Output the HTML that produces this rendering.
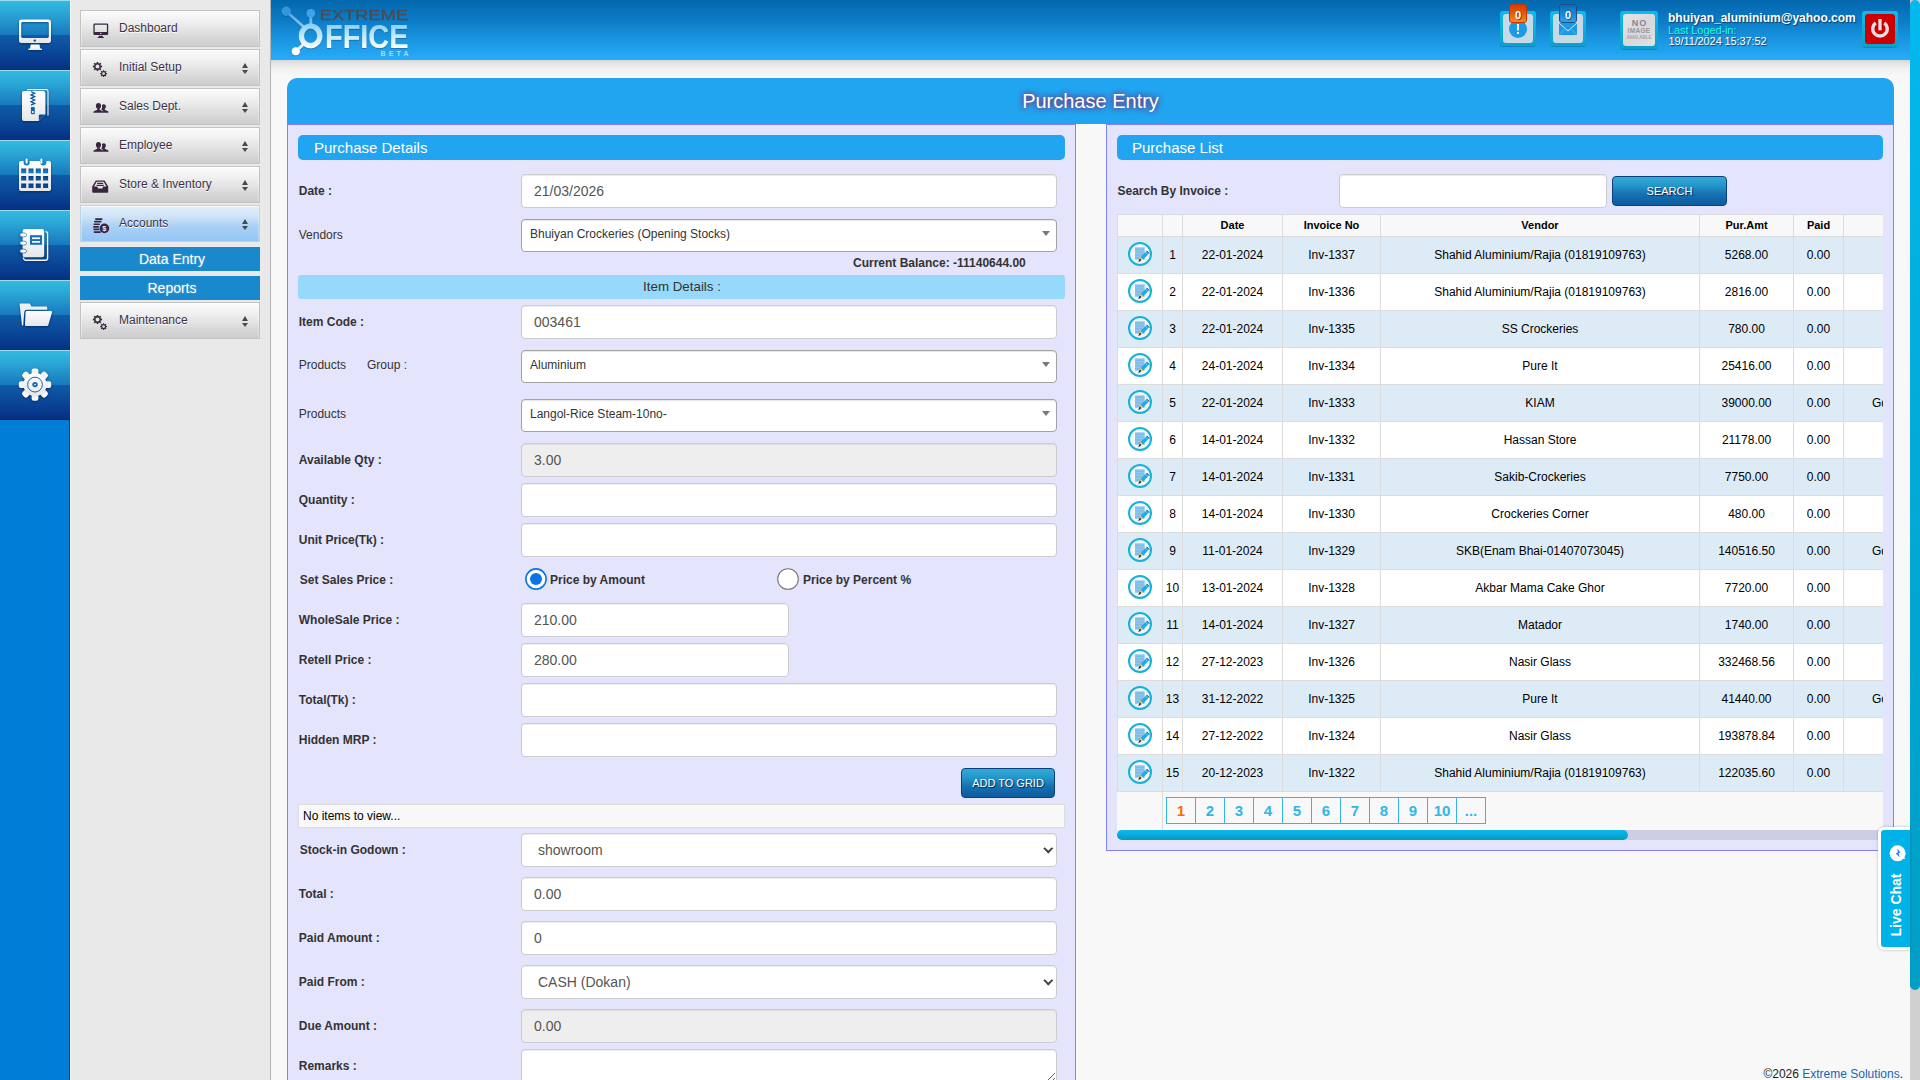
<!DOCTYPE html>
<html>
<head>
<meta charset="utf-8">
<title>Purchase Entry</title>
<style>
*{box-sizing:border-box;margin:0;padding:0}
html,body{width:1920px;height:1080px;overflow:hidden}
body{font-family:"Liberation Sans",sans-serif;font-size:12px;color:#333;background:#f8f8f8;position:relative}
.abs{position:absolute}

/* ---------- icon bar ---------- */
#iconbar{position:absolute;left:0;top:0;width:70px;height:1080px;background:#007dd6;border-right:1px solid #0a3d72}
.tile{position:absolute;left:0;width:70px;height:70px;border-top:1px solid #9adcf2;
 background:linear-gradient(to bottom,#33bbe0 0%,#2ba6d6 18%,#1d86c5 40%,#1878bc 50%,#0f5ba8 50%,#0b4b9a 70%,#07398c 90%,#06307f 100%)}
.tile svg{position:absolute;left:0;top:-1px;width:70px;height:70px;filter:drop-shadow(0 1px 1px rgba(0,20,60,.55))}

/* ---------- menu panel ---------- */
#menu{position:absolute;left:70px;top:0;width:201px;height:1080px;background:#e9e9e9;border-right:1px solid #b4b4b4;border-left:1px solid #f7f5f1}
.mbtn{position:absolute;left:9px;width:180px;height:37px;border:1px solid #c3c3c3;
 background:linear-gradient(to bottom,#fbfbfb 0%,#f2f2f2 25%,#e3e3e3 55%,#d6d6d6 80%,#cdcdcd 100%);
 box-shadow:inset 0 1px 0 rgba(255,255,255,.7),inset 1px 0 0 rgba(255,255,255,.35),inset -1px 0 0 rgba(255,255,255,.25);
 color:#3d3149;font-size:12px;line-height:14px;text-shadow:0 1px 0 #fff}
.mbtn.act{background:linear-gradient(to bottom,#e3eefa 0%,#cfe3f8 30%,#a9d0f5 60%,#93c6f5 100%);border-color:#b9d3ea}
.mbtn span{position:absolute;left:38px;top:10px;white-space:nowrap}
.mbtn svg.ic{position:absolute;left:11px;top:11px;width:18px;height:18px}
.mbtn i{position:absolute;left:161.200px;width:0;height:0;border-left:3.900px solid transparent;border-right:3.900px solid transparent}
.mbtn i.u{top:13px;border-bottom:5px solid #4a4a4a}
.mbtn i.d{top:20px;border-top:4.5px solid #4a4a4a}
.sub{position:absolute;left:9px;width:180px;height:24px;padding-left:4px;background:#1a88cd;color:#fff;font-size:14px;line-height:24px;text-align:center;text-shadow:0 0 2px rgba(255,255,255,.35)}

/* ---------- header ---------- */
#header{position:absolute;left:271px;top:0;width:1639px;height:60px;background:linear-gradient(to bottom,#0367ad 0%,#0d7cc6 35%,#1c98e4 70%,#28acf8 100%)}
#hshadow{position:absolute;left:271px;top:60px;width:1639px;height:16px;background:linear-gradient(to bottom,#d6d6d6 0%,#e6e6e6 25%,#f1f1f1 55%,#f8f8f8 100%)}

/* ---------- main ---------- */
#titlebar{position:absolute;left:287px;top:78px;width:1607px;height:46px;background:#22a5f0;border-radius:10px 10px 0 0;
 color:#fff;font-size:20px;line-height:46px;text-align:center;text-shadow:0 0 6px rgba(130,30,100,.95),0 0 5px rgba(130,40,110,.75)}
#lpanel{position:absolute;left:287px;top:124px;width:789px;height:970px;background:#e4e4fd;border:1px solid #8080ff}
#rpanel{position:absolute;left:1106px;top:124px;width:788px;height:727px;background:#e4e4fd;border:1px solid #8080ff}
.shead{position:absolute;height:25px;background:#22a5f0;border-radius:5px;color:#fff;font-size:15px;line-height:25px;padding-left:16px}
.lbl{position:absolute;left:298.75px;font-weight:bold;font-size:12px;line-height:14px;color:#333;white-space:nowrap}
.lbl.n{font-weight:normal}
.fc{position:absolute;left:521px;width:536px;height:34px;border:1px solid #ccc;border-radius:4px;background:#fff;
 box-shadow:inset 0 1px 1px rgba(0,0,0,.075);font-size:14px;line-height:20px;color:#555;padding:6px 12px;white-space:nowrap}
.fc.dis{background:#eee}
.fc.half{width:268px}
.cb{position:absolute;left:521px;width:536px;height:33px;border:1px solid #a2a2a2;border-radius:4px;background:#fff;
 font-size:12px;line-height:14px;color:#333;padding:7px 8px;white-space:nowrap;box-shadow:inset 0 1px 1px rgba(0,0,0,.1)}
.cb:after{content:"";position:absolute;right:6px;top:11px;border-left:4px solid transparent;border-right:4px solid transparent;border-top:5px solid #7a7a7a}
.sel:after{content:"";position:absolute;right:4.900px;top:11.200px;width:4.600px;height:4.600px;border-right:2px solid #444;border-bottom:2px solid #444;transform:rotate(45deg)}
.sel{padding-left:16px}
.btn{position:absolute;height:30px;border:1px solid #0b3f7e;border-radius:4px;color:#fff;text-align:center;font-size:11px;line-height:28px;
 background:linear-gradient(to bottom,#31abd6 0%,#2596cb 30%,#1573b2 60%,#0d5a9f 100%);text-shadow:1px 1px 1px #06264f}

.radio{width:22px;height:22px;border-radius:50%;background:#fff;border:1px solid #767676}
.radio.on{border:2px solid #0a74e6}
.radio.on:after{content:"";position:absolute;left:3px;top:3px;width:12px;height:12px;border-radius:50%;background:#0a74e6}

#grid{position:absolute;left:1117px;top:214px;width:766px;height:616px;overflow:hidden;background:#f8f8f8}
.gh{position:absolute;left:0;top:0;width:800px;height:23px;background:#f8f8f8}
.gh b{position:absolute;top:0;height:23px;border:1px solid #dcdcdc;border-right:none;font-size:11px;line-height:21px;text-align:center;color:#000;font-weight:bold}
.gr{position:absolute;left:0;width:800px;height:37px;background:#fff}
.gr.alt{background:#ddebf6}
.gr s{position:absolute;top:0;height:38px;border:1px solid #dcdcdc;border-right:none;border-bottom:none;text-decoration:none;font-size:12px;line-height:36px;text-align:center;color:#000;white-space:nowrap;overflow:hidden}
.eic{position:absolute;left:9px;top:4px;width:26px;height:26px}
.pgr{position:absolute;left:0;top:577px;width:800px;height:39px;background:#f8f8f8;border-top:1px solid #dcdcdc}
.pgr em{position:absolute;left:45px;top:0;width:1px;height:39px;background:#dcdcdc}
.pgr a{position:absolute;top:5px;width:30px;height:27px;border:1px solid #33b5e5;color:#33b5e5;font-weight:bold;font-size:15px;line-height:25px;text-align:center}
.pgr a.cur{color:#ff6a00}

.hbox{position:absolute;background:linear-gradient(to bottom,#0fbaec 0%,#0aa0cc 100%);border-radius:3px;box-shadow:0 1px 0 rgba(0,120,170,.6)}
.hbox>div{position:absolute;left:3px;top:3px;right:3px;bottom:3px;border-radius:3px;background:#c6d9e6}
.badge{position:absolute;width:18px;height:19px;border-radius:3px;color:#fff;font-weight:bold;font-size:11px;line-height:20px;text-align:center;text-shadow:1px 1px 0 rgba(0,0,0,.45)}
</style>
</head>
<body>

<!-- ICON BAR -->
<div id="iconbar">
 <div class="tile" style="top:0"><svg viewBox="0 0 70 70"><defs><linearGradient id="wg1" x1="0" y1="0" x2="0" y2="1"><stop offset="0" stop-color="#ffffff"/><stop offset="1" stop-color="#e4e6ea"/></linearGradient></defs>
<path fill="url(#wg1)" fill-rule="evenodd" d="M21.5 19.5h27a2.5 2.5 0 0 1 2.5 2.5v18.5a2.5 2.5 0 0 1-2.5 2.5h-27a2.5 2.5 0 0 1-2.5-2.5v-18.5a2.5 2.5 0 0 1 2.5-2.5zM22.6 22a1.4 1.4 0 0 0-1.4 1.4v13.2a1.4 1.4 0 0 0 1.4 1.4h24.8a1.4 1.4 0 0 0 1.4-1.4v-13.2a1.4 1.4 0 0 0-1.4-1.4z"/>
<circle cx="34.8" cy="40.6" r="1.2" fill="#0d4f9f"/>
<path fill="url(#wg1)" d="M30.8 44.6h8.6l0.9 3.9h1a0.7 0.7 0 0 1 0 1.6h-12.4a0.7 0.7 0 0 1 0-1.6h1z"/></svg></div>
 <div class="tile" style="top:70px"><svg viewBox="0 0 70 70"><defs><linearGradient id="wg2" x1="0" y1="0" x2="0" y2="1"><stop offset="0" stop-color="#ffffff"/><stop offset="1" stop-color="#e4e6ea"/></linearGradient></defs>
<path fill="none" stroke="#f4f6f8" stroke-width="1.1" d="M27 19.6h19.4a1.6 1.6 0 0 1 1.6 1.6v24.3"/>
<path fill="url(#wg2)" d="M24 21h19.4a2 2 0 0 1 2 2v21.3l-6.8 6.7h-14.6a2 2 0 0 1-2-2v-26a2 2 0 0 1 2-2z"/>
<path fill="#0b4a98" d="M38.8 50.6v-5.2a1 1 0 0 1 1-1h5.2z"/>
<path fill="none" stroke="#0f5aa8" stroke-width="1.3" d="M31 21.5l3.6 1.7-3.6 1.7 3.6 1.7-3.6 1.7 3.6 1.7-3.6 1.7 3.6 1.7-3.6 1.7"/>
<rect x="30.9" y="37" width="3.9" height="7.2" rx="1" fill="#1364b0"/><rect x="32" y="41" width="1.7" height="2" fill="#dfe6ee"/></svg></div>
 <div class="tile" style="top:140px"><svg viewBox="0 0 70 70"><defs><linearGradient id="wg3" x1="0" y1="0" x2="0" y2="1"><stop offset="0" stop-color="#ffffff"/><stop offset="1" stop-color="#e4e6ea"/></linearGradient></defs>
<path fill="url(#wg3)" fill-rule="evenodd" d="M21 21h2.6v1.5a3 3 0 0 0 6 0v-1.5h10.8v1.5a3 3 0 0 0 6 0v-1.5h2.6a2 2 0 0 1 2 2v26a2 2 0 0 1-2 2h-28a2 2 0 0 1-2-2v-26a2 2 0 0 1 2-2zM21.2 28.6h5v4.6h-5zM28.5 28.6h5v4.6h-5zM35.8 28.6h5v4.6h-5zM43.1 28.6h5v4.6h-5zM21.2 36.0h5v4.6h-5zM28.5 36.0h5v4.6h-5zM35.8 36.0h5v4.6h-5zM43.1 36.0h5v4.6h-5zM21.2 43.4h5v4.6h-5zM28.5 43.4h5v4.6h-5zM35.8 43.4h5v4.6h-5zM43.1 43.4h5v4.6h-5z"/>
<rect x="25.6" y="18.4" width="2" height="5.4" rx="1" fill="#fff"/><rect x="40.4" y="18.4" width="2" height="5.4" rx="1" fill="#fff"/></svg></div>
 <div class="tile" style="top:210px"><svg viewBox="0 0 70 70"><defs><linearGradient id="wg4" x1="0" y1="0" x2="0" y2="1"><stop offset="0" stop-color="#ffffff"/><stop offset="1" stop-color="#e4e6ea"/></linearGradient></defs>
<path fill="none" stroke="#f4f6f8" stroke-width="1.4" d="M45.6 21.8a2 2 0 0 1 2 2v24.4a2 2 0 0 1-2 2h-19.6a2.6 2.6 0 0 1-2.6-2.6"/>
<rect x="22.6" y="19" width="21.6" height="28.2" rx="2.2" fill="url(#wg4)"/>
<ellipse cx="23.2" cy="24.9" rx="3.4" ry="2.1" fill="#fff" stroke="#1473bb" stroke-width="0.7"/>
<ellipse cx="23.2" cy="33.1" rx="3.4" ry="2.1" fill="#fff" stroke="#1168b2" stroke-width="0.7"/>
<ellipse cx="23.2" cy="41.1" rx="3.4" ry="2.1" fill="#fff" stroke="#0e59a4" stroke-width="0.7"/>
<rect x="30" y="25.2" width="12" height="9.6" fill="#1470bb"/><rect x="32" y="27.4" width="8" height="1.7" fill="#fff"/><rect x="32" y="31" width="8" height="1.7" fill="#fff"/></svg></div>
 <div class="tile" style="top:280px"><svg viewBox="0 0 70 70"><defs><linearGradient id="wg5" x1="0" y1="0" x2="0" y2="1"><stop offset="0" stop-color="#ffffff"/><stop offset="1" stop-color="#e4e6ea"/></linearGradient></defs>
<path fill="#eceef2" d="M19.6 24.3a0.8 0.8 0 0 1 0.8-0.8h9.4l1.6 3h14.8a1 1 0 0 1 1 1v2.3h-20.6a2.4 2.4 0 0 0-2.4 2.2l-1 13.6h-1.2z"/>
<path fill="url(#wg5)" d="M26.6 31h24.2a1.2 1.2 0 0 1 1.2 1.6l-3.6 12.2a1.6 1.6 0 0 1-1.6 1.2h-20.4a1.4 1.4 0 0 1-1.4-1.6l0.6-12.2a1.2 1.2 0 0 1 1-1.2z"/></svg></div>
 <div class="tile" style="top:350px;border-bottom:1px solid #041c52"><svg viewBox="0 0 70 70"><defs><linearGradient id="wg6" x1="0" y1="0" x2="0" y2="1"><stop offset="0" stop-color="#ffffff"/><stop offset="1" stop-color="#e4e6ea"/></linearGradient></defs>
<g transform="translate(35 34.6)" fill="url(#wg6)"><rect x="-3.4" y="-16.2" width="6.8" height="7" rx="2.2" transform="rotate(0)"/><rect x="-3.4" y="-16.2" width="6.8" height="7" rx="2.2" transform="rotate(45)"/><rect x="-3.4" y="-16.2" width="6.8" height="7" rx="2.2" transform="rotate(90)"/><rect x="-3.4" y="-16.2" width="6.8" height="7" rx="2.2" transform="rotate(135)"/><rect x="-3.4" y="-16.2" width="6.8" height="7" rx="2.2" transform="rotate(180)"/><rect x="-3.4" y="-16.2" width="6.8" height="7" rx="2.2" transform="rotate(225)"/><rect x="-3.4" y="-16.2" width="6.8" height="7" rx="2.2" transform="rotate(270)"/><rect x="-3.4" y="-16.2" width="6.8" height="7" rx="2.2" transform="rotate(315)"/><circle r="11.6"/></g>
<circle cx="35" cy="34.6" r="7.4" fill="none" stroke="#0d4f9e" stroke-width="0.9"/>
<circle cx="35" cy="34.6" r="2.7" fill="#1468b4"/><circle cx="35" cy="34.6" r="0.8" fill="#fff"/></svg></div>
</div>

<!-- MENU -->
<div id="menu">
 <div class="mbtn" style="top:10px"><svg class="ic" viewBox="0 0 18 18"><path fill="#38263f" fill-rule="evenodd" d="M2.6 1.4h12.4a1.2 1.2 0 0 1 1.2 1.2v9.2a1.2 1.2 0 0 1-1.2 1.2h-12.4a1.2 1.2 0 0 1-1.2-1.2v-9.2a1.2 1.2 0 0 1 1.2-1.2zM2.7 2.7v7.3h12.2v-7.3z"/><circle cx="8.8" cy="11.4" r="0.6" fill="#fff"/><path fill="#38263f" d="M7 13.7h3.6l0.5 1.5h0.9v0.9h-6.4v-0.9h0.9z"/></svg><span>Dashboard</span></div>
 <div class="mbtn" style="top:49px"><svg class="ic" viewBox="0 0 18 18"><path fill="#38263f" fill-rule="evenodd" d="M10.11 4.58L10.11 6.42L8.93 6.18L8.41 7.44L9.41 8.11L8.11 9.41L7.44 8.41L6.18 8.93L6.42 10.11L4.58 10.11L4.82 8.93L3.56 8.41L2.89 9.41L1.59 8.11L2.59 7.44L2.07 6.18L0.89 6.42L0.89 4.58L2.07 4.82L2.59 3.56L1.59 2.89L2.89 1.59L3.56 2.59L4.82 2.07L4.58 0.89L6.42 0.89L6.18 2.07L7.44 2.59L8.11 1.59L9.41 2.89L8.41 3.56L8.93 4.82zM7.50 5.50A2.0 2.0 0 1 0 3.50 5.50A2.0 2.0 0 1 0 7.50 5.50z"/><path fill="#38263f" fill-rule="evenodd" d="M15.03 11.92L15.03 13.28L14.15 13.11L13.76 14.04L14.51 14.54L13.54 15.51L13.04 14.76L12.11 15.15L12.28 16.03L10.92 16.03L11.09 15.15L10.16 14.76L9.66 15.51L8.69 14.54L9.44 14.04L9.05 13.11L8.17 13.28L8.17 11.92L9.05 12.09L9.44 11.16L8.69 10.66L9.66 9.69L10.16 10.44L11.09 10.05L10.92 9.17L12.28 9.17L12.11 10.05L13.04 10.44L13.54 9.69L14.51 10.66L13.76 11.16L14.15 12.09zM13.00 12.60A1.4 1.4 0 1 0 10.20 12.60A1.4 1.4 0 1 0 13.00 12.60z"/></svg><span>Initial Setup</span><i class="u"></i><i class="d"></i></div>
 <div class="mbtn" style="top:88px"><svg class="ic" viewBox="0 0 18 18"><g fill="#38263f" transform="translate(0.3 -1.6) scale(0.95)"><path d="M12.2 6.2c1.3 0 2.1 1 2.1 2.3 0 1.2-.6 2.2-1.2 2.7v.7l3.4 1.6c.3.2.5.5.5.9v.6h-5.6v-1.2c0-.6-.3-1.1-.9-1.4l-1-.5c.5-.7.9-1.600.9-2.800 0-.7-.1-1.300-.4-1.800.5-.7 1.300-1.100 2.200-1.100z"/><path d="M6.500 4.800c1.700 0 2.700 1.300 2.700 2.900 0 1.500-.7 2.700-1.500 3.300v.9l3.300 1.500c.4.200.7.600.7 1.100v.5h-10.600v-.5c0-.5.300-.900.700-1.100l3.500-1.500v-.9c-.8-.6-1.500-1.800-1.500-3.300 0-1.600 1-2.900 2.700-2.900z"/></g></svg><span>Sales Dept.</span><i class="u"></i><i class="d"></i></div>
 <div class="mbtn" style="top:127px"><svg class="ic" viewBox="0 0 18 18"><g fill="#38263f" transform="translate(0.3 -1.6) scale(0.95)"><path d="M12.2 6.2c1.3 0 2.1 1 2.1 2.3 0 1.2-.6 2.2-1.2 2.7v.7l3.4 1.6c.3.2.5.5.5.9v.6h-5.6v-1.2c0-.6-.3-1.1-.9-1.4l-1-.5c.5-.7.9-1.600.9-2.800 0-.7-.1-1.300-.4-1.800.5-.7 1.300-1.100 2.200-1.100z"/><path d="M6.500 4.800c1.700 0 2.700 1.300 2.700 2.900 0 1.500-.7 2.700-1.500 3.300v.9l3.300 1.500c.4.200.7.600.7 1.100v.5h-10.600v-.5c0-.5.300-.900.700-1.100l3.500-1.500v-.9c-.8-.6-1.500-1.800-1.500-3.300 0-1.600 1-2.900 2.700-2.900z"/></g></svg><span>Employee</span><i class="u"></i><i class="d"></i></div>
 <div class="mbtn" style="top:166px"><svg class="ic" viewBox="0 0 18 18"><g fill="#38263f" transform="translate(-0.8 -0.8)"><path fill-rule="evenodd" d="M4.600 3.200h8.800l3.600 6.200v5.200a1 1 0 0 1-1 1h-14a1 1 0 0 1-1-1v-5.200zM5.500 4.600l-2.700 4.800h3.300l.8 1.800h4.200l.8-1.800h3.300l-2.700-4.800z"/><rect x="6" y="5.600" width="6" height="1.200"/><rect x="5.400" y="7.600" width="7.200" height="1.200"/></g></svg><span>Store &amp; Inventory</span><i class="u"></i><i class="d"></i></div>
 <div class="mbtn act" style="top:205px"><svg class="ic" viewBox="0 0 18 18"><g fill="#38263f"><rect x="3" y="1.200" width="7.600" height="1.700" rx=".8"/><rect x="2" y="3.800" width="7.600" height="1.700" rx=".8"/><rect x="1.400" y="6.400" width="6.600" height="1.700" rx=".8"/><rect x="1" y="9" width="6" height="1.700" rx=".8"/><rect x="1.400" y="11.600" width="6" height="1.700" rx=".8"/><rect x="1.600" y="14.200" width="7.400" height="1.700" rx=".8"/><circle cx="12.400" cy="11.400" r="4.800"/></g><text x="12.400" y="14" font-family="Liberation Sans" font-weight="bold" font-size="7.400" fill="#e6eef8" text-anchor="middle" style="text-shadow:none">$</text></svg><span>Accounts</span><i class="u"></i><i class="d"></i></div>
 <div class="sub" style="top:247px">Data Entry</div>
 <div class="sub" style="top:276px">Reports</div>
 <div class="mbtn" style="top:302px"><svg class="ic" viewBox="0 0 18 18"><path fill="#38263f" fill-rule="evenodd" d="M10.11 4.58L10.11 6.42L8.93 6.18L8.41 7.44L9.41 8.11L8.11 9.41L7.44 8.41L6.18 8.93L6.42 10.11L4.58 10.11L4.82 8.93L3.56 8.41L2.89 9.41L1.59 8.11L2.59 7.44L2.07 6.18L0.89 6.42L0.89 4.58L2.07 4.82L2.59 3.56L1.59 2.89L2.89 1.59L3.56 2.59L4.82 2.07L4.58 0.89L6.42 0.89L6.18 2.07L7.44 2.59L8.11 1.59L9.41 2.89L8.41 3.56L8.93 4.82zM7.50 5.50A2.0 2.0 0 1 0 3.50 5.50A2.0 2.0 0 1 0 7.50 5.50z"/><path fill="#38263f" fill-rule="evenodd" d="M15.03 11.92L15.03 13.28L14.15 13.11L13.76 14.04L14.51 14.54L13.54 15.51L13.04 14.76L12.11 15.15L12.28 16.03L10.92 16.03L11.09 15.15L10.16 14.76L9.66 15.51L8.69 14.54L9.44 14.04L9.05 13.11L8.17 13.28L8.17 11.92L9.05 12.09L9.44 11.16L8.69 10.66L9.66 9.69L10.16 10.44L11.09 10.05L10.92 9.17L12.28 9.17L12.11 10.05L13.04 10.44L13.54 9.69L14.51 10.66L13.76 11.16L14.15 12.09zM13.00 12.60A1.4 1.4 0 1 0 10.20 12.60A1.4 1.4 0 1 0 13.00 12.60z"/></svg><span>Maintenance</span><i class="u"></i><i class="d"></i></div>
</div>

<!-- HEADER -->
<div id="header"></div>
<div id="hshadow"></div>


<!-- HEADER CONTENT -->
<svg class="abs" style="left:271px;top:0" width="160" height="60" viewBox="0 0 160 60">
 <defs>
  <linearGradient id="lg1" gradientUnits="userSpaceOnUse" x1="0" y1="24" x2="0" y2="48"><stop offset="0" stop-color="#86cffa"/><stop offset="0.5" stop-color="#c4e8fb"/><stop offset="1" stop-color="#ffffff"/></linearGradient>
  <linearGradient id="lg2" gradientUnits="userSpaceOnUse" x1="0" y1="8" x2="0" y2="30"><stop offset="0" stop-color="#3a9de0"/><stop offset="1" stop-color="#8ed0f8"/></linearGradient>
  <filter id="ds" x="-10%" y="-10%" width="120%" height="130%"><feDropShadow dx="0" dy="0.5" stdDeviation="0.7" flood-color="#0a3a6a" flood-opacity=".75"/></filter>
 </defs>
 <g filter="url(#ds)">
  <path d="M15.2 11.2L32.6 26.8" stroke="url(#lg2)" stroke-width="2.8"/>
  <path d="M39.8 13.3V24.6" stroke="url(#lg2)" stroke-width="2.8"/>
  <path d="M24.8 51.2L32 44.8" stroke="#f2f9ff" stroke-width="2.8"/>
  <circle cx="15.2" cy="11.2" r="4.7" fill="#3297dc"/>
  <circle cx="39.8" cy="13.3" r="4.4" fill="#3fa3e6"/>
  <circle cx="24.8" cy="51.2" r="4" fill="#fff"/>
  <ellipse cx="39.6" cy="35.8" rx="9.2" ry="9.8" fill="none" stroke="url(#lg1)" stroke-width="5.2"/>
 </g>
 <text x="49" y="19.9" font-family="Liberation Sans" font-size="15" fill="#484d57" stroke="#484d57" stroke-width="0.35" textLength="88.5" lengthAdjust="spacingAndGlyphs">EXTREME</text>
 <g filter="url(#ds)">
 <text x="54" y="47.8" font-family="Liberation Sans" font-weight="bold" font-size="33" fill="url(#lg1)" textLength="83.5" lengthAdjust="spacingAndGlyphs">FFICE</text>
 </g>
 <text x="109.500" y="55.500" font-family="Liberation Sans" font-weight="bold" font-size="7" fill="#a6dcfa" textLength="28" lengthAdjust="spacing">BETA</text>
</svg>

<div class="hbox" style="left:1500px;top:11px;width:36px;height:35px"><div></div></div>
<svg class="abs" style="left:1508px;top:19px" width="20" height="20" viewBox="0 0 20 20"><circle cx="10" cy="10" r="9" fill="#1d9ae6"/><rect x="9" y="5" width="2" height="6.5" fill="#e8f2f8"/><rect x="9" y="13" width="2" height="2" fill="#e8f2f8"/></svg>
<div class="badge" style="left:1509px;top:4px;background:linear-gradient(to bottom,#d63c00 0%,#e85a08 50%,#f68d1e 100%);border:1px solid #c23600">0</div>

<div class="hbox" style="left:1550px;top:11px;width:36px;height:35px"><div></div></div>
<svg class="abs" style="left:1559px;top:23px" width="18" height="12" viewBox="0 0 18 12"><rect width="18" height="12" rx="1" fill="#1d9ae6"/><path d="M0.5 0.5L9 8L17.5 0.5" fill="none" stroke="#cfe6f5" stroke-width="1"/><path d="M1 11L6.5 6M17 11L11.5 6" stroke="#5ab6ee" stroke-width="0.8"/></svg>
<div class="badge" style="left:1559px;top:4px;background:linear-gradient(to bottom,#0c6cb8 0%,#1786d4 50%,#2ba2ec 100%);border:1px solid #1a4f80">0</div>

<div class="hbox" style="left:1620px;top:11px;width:38px;height:38px"><div style="background:linear-gradient(135deg,#e6e6e9 0%,#d8d8dc 50%,#e2e2e5 100%)"></div></div>
<div class="abs" style="left:1623px;top:19px;width:32px;text-align:center;font-weight:bold;color:#85858d;line-height:1">
 <div style="font-size:9px;letter-spacing:1px;padding-left:1px">NO</div><div style="font-size:6.500px;letter-spacing:.3px;margin-top:0;color:#96969d">IMAGE</div><div style="font-size:4.500px;margin-top:1.5px;color:#a2a2a8">AVAILABLE</div></div>

<div class="abs" style="left:1668px;top:11px;font-size:12px;font-weight:bold;color:#fff;line-height:14px;text-shadow:1px 1px 1px #0b3b66;white-space:nowrap">bhuiyan_aluminium@yahoo.com</div>
<div class="abs" style="left:1668px;top:24px;font-size:11px;letter-spacing:-0.1px;color:#1cfce8;line-height:12px;text-shadow:1px 1px 1px #0b5a96;white-space:nowrap">Last Loged-in:</div>
<div class="abs" style="left:1668.5px;top:35px;font-size:11px;letter-spacing:-0.11px;color:#fff;line-height:12px;text-shadow:1px 1px 1px #0b3b66;white-space:nowrap">19/11/2024 15:37:52</div>

<div class="hbox" style="left:1862px;top:11px;width:36px;height:36px"><div style="background:#cc0000"></div></div>
<svg class="abs" style="left:1870px;top:19px" width="20" height="20" viewBox="0 0 20 20"><path d="M5.700 3.900A7.300 7.300 0 1 0 14.300 3.900" fill="none" stroke="#e8dcdc" stroke-width="3.500"/><path d="M10 0V11.300" stroke="#e6e2e2" stroke-width="3.300"/></svg>

<!-- SCROLLBAR -->
<div class="abs" style="left:1910px;top:0;width:10px;height:1080px;background:#d0d0d0"></div>
<div class="abs" style="left:1910px;top:0;width:10px;height:990px;border-radius:5px;background:linear-gradient(to bottom,#02b9ee 0%,#01a9d6 50%,#009ec5 100%)"></div>

<!-- FOOTER -->
<div class="abs" style="left:1700px;top:1067px;width:203px;text-align:right;font-size:12px;line-height:14px;color:#222;white-space:nowrap">&copy;2026 <span style="color:#1565c0">Extreme Solutions</span>.</div>

<!-- MAIN -->
<div id="titlebar">Purchase Entry</div>
<div id="lpanel"></div>
<div id="rpanel"></div>

<div class="shead" style="left:298px;top:135px;width:767px">Purchase Details</div>
<div class="shead" style="left:1117px;top:135px;width:766px;padding-left:15px">Purchase List</div>


<!-- LEFT FORM -->
<div class="lbl" style="top:184px">Date :</div>
<div class="fc" style="top:174px">21/03/2026</div>
<div class="lbl n" style="top:228px">Vendors</div>
<div class="cb" style="top:219px">Bhuiyan Crockeries (Opening Stocks)</div>
<div class="lbl" style="left:853px;top:256px">Current Balance: -11140644.00</div>
<div class="abs" style="left:298px;top:275px;width:767px;height:24px;background:#97d9fd;border-radius:3px;text-align:center;font-size:13.33px;line-height:23px;color:#333;padding-left:1px">Item Details :</div>
<div class="lbl" style="top:315px">Item Code :</div>
<div class="fc" style="top:305px">003461</div>
<div class="lbl n" style="top:358px">Products</div><div class="lbl n" style="left:367px;top:358px">Group :</div>
<div class="cb" style="top:350px">Aluminium</div>
<div class="lbl n" style="top:407px">Products</div>
<div class="cb" style="top:399px">Langol-Rice Steam-10no-</div>
<div class="lbl" style="top:453px">Available Qty :</div>
<div class="fc dis" style="top:443px">3.00</div>
<div class="lbl" style="top:493px">Quantity :</div>
<div class="fc" style="top:483px"></div>
<div class="lbl" style="top:533px">Unit Price(Tk) :</div>
<div class="fc" style="top:523px"></div>
<div class="lbl" style="left:299.75px;top:573px">Set Sales Price :</div>
<svg class="abs" style="left:525px;top:568px" width="22" height="22" viewBox="0 0 22 22"><circle cx="11" cy="11" r="10.1" fill="#fff" stroke="#0a74e6" stroke-width="1.6"/><circle cx="11" cy="11" r="6" fill="#0a74e6"/></svg>
<div class="lbl" style="left:550px;top:573px">Price by Amount</div>
<svg class="abs" style="left:777px;top:568px" width="22" height="22" viewBox="0 0 22 22"><circle cx="11" cy="11" r="10.3" fill="#fff" stroke="#767676" stroke-width="1.1"/></svg>
<div class="lbl" style="left:803px;top:573px">Price by Percent %</div>
<div class="lbl" style="top:613px">WholeSale Price :</div>
<div class="fc half" style="top:603px">210.00</div>
<div class="lbl" style="top:653px">Retell Price :</div>
<div class="fc half" style="top:643px">280.00</div>
<div class="lbl" style="top:693px">Total(Tk) :</div>
<div class="fc" style="top:683px"></div>
<div class="lbl" style="top:733px">Hidden MRP :</div>
<div class="fc" style="top:723px"></div>
<div class="btn" style="left:961px;top:768px;width:94px">ADD TO GRID</div>
<div class="abs" style="left:298px;top:804px;width:767px;height:24px;background:#f8f8f8;border:1px solid #dcdcdc;font-size:12px;line-height:22px;padding-left:4px;color:#000">No items to view...</div>
<div class="lbl" style="left:299.75px;top:843px">Stock-in Godown :</div>
<div class="fc sel" style="top:833px">showroom</div>
<div class="lbl" style="top:887px">Total :</div>
<div class="fc" style="top:877px">0.00</div>
<div class="lbl" style="top:931px">Paid Amount :</div>
<div class="fc" style="top:921px">0</div>
<div class="lbl" style="top:975px">Paid From :</div>
<div class="fc sel" style="top:965px">CASH (Dokan)</div>
<div class="lbl" style="top:1019px">Due Amount :</div>
<div class="fc dis" style="top:1009px">0.00</div>
<div class="lbl" style="top:1059px">Remarks :</div>
<div class="fc" style="top:1049px;height:54px"></div>
<svg class="abs" style="left:1044px;top:1072px" width="12" height="12" viewBox="0 0 12 12"><path d="M1 11L11 1M6 11L11 6" stroke="#666" stroke-width="1" fill="none"/></svg>

<svg width="0" height="0" style="position:absolute"><defs>
<g id="edit">
<circle cx="13" cy="13" r="11" fill="#edf6fb" stroke="#18b0d8" stroke-width="2"/>
<rect x="7.1" y="5.7" width="11.4" height="13.8" rx="0.6" fill="#fbfdff"/>
<rect x="8" y="6.5" width="9.6" height="12.200" fill="#a9d3f0"/>
<path d="M8 7.1h9.6M8 8.7h9.6M8 10.2h9.6M8 11.8h9.6M8 13.3h9.6M8 14.8h9.6M8 16.4h9.6M8 17.9h9.6" stroke="#69b0e2" stroke-width="0.85"/>
<path d="M19.5 10.1l2.500 2.500-5.900 5.900-2.500-2.500z" fill="#20a9e8"/>
<path d="M18.500 11.100l2.500 2.500" stroke="#bfe6f8" stroke-width="0.5"/>
<path d="M19.700 9.900l2.700 2.700" stroke="#16364f" stroke-width="0.8"/>
<path d="M13.600 16l2.500 2.500-2.600 1.100-1-1z" fill="#f4cf62"/>
<path d="M12.300 18.700l1.200 1.200-2.300 1z" fill="#111"/>
<path d="M12.900 17.600l1.600 1.600-2 .8-.5-.5z" fill="#222"/>
</g></defs></svg>
<!-- RIGHT PANEL -->
<div class="lbl" style="left:1117.5px;top:184px">Search By Invoice :</div>
<div class="fc" style="left:1339px;top:174px;width:268px"></div>
<div class="btn" style="left:1612px;top:176px;width:115px;height:30px;font-size:11px">SEARCH</div>
<div id="grid">
<div class="gh"><b style="left:0;width:45px"></b><b style="left:45px;width:20px"></b><b style="left:65px;width:100px">Date</b><b style="left:165px;width:98px">Invoice No</b><b style="left:263px;width:319px">Vendor</b><b style="left:582px;width:94px">Pur.Amt</b><b style="left:676px;width:50px">Paid</b><b style="left:726px;width:60px"></b></div>
<div class="gr alt" style="top:22px"><s style="left:0;width:45px"><svg class="eic" viewBox="0 0 26 26"><use href="#edit"/></svg></s><s style="left:45px;width:20px">1</s><s style="left:65px;width:100px">22-01-2024</s><s style="left:165px;width:98px">Inv-1337</s><s style="left:263px;width:319px">Shahid Aluminium/Rajia (01819109763)</s><s style="left:582px;width:94px">5268.00</s><s style="left:676px;width:50px">0.00</s><s style="left:726px;width:60px;text-align:left;padding-left:28px"></s></div>
<div class="gr" style="top:59px"><s style="left:0;width:45px"><svg class="eic" viewBox="0 0 26 26"><use href="#edit"/></svg></s><s style="left:45px;width:20px">2</s><s style="left:65px;width:100px">22-01-2024</s><s style="left:165px;width:98px">Inv-1336</s><s style="left:263px;width:319px">Shahid Aluminium/Rajia (01819109763)</s><s style="left:582px;width:94px">2816.00</s><s style="left:676px;width:50px">0.00</s><s style="left:726px;width:60px;text-align:left;padding-left:28px"></s></div>
<div class="gr alt" style="top:96px"><s style="left:0;width:45px"><svg class="eic" viewBox="0 0 26 26"><use href="#edit"/></svg></s><s style="left:45px;width:20px">3</s><s style="left:65px;width:100px">22-01-2024</s><s style="left:165px;width:98px">Inv-1335</s><s style="left:263px;width:319px">SS Crockeries</s><s style="left:582px;width:94px">780.00</s><s style="left:676px;width:50px">0.00</s><s style="left:726px;width:60px;text-align:left;padding-left:28px"></s></div>
<div class="gr" style="top:133px"><s style="left:0;width:45px"><svg class="eic" viewBox="0 0 26 26"><use href="#edit"/></svg></s><s style="left:45px;width:20px">4</s><s style="left:65px;width:100px">24-01-2024</s><s style="left:165px;width:98px">Inv-1334</s><s style="left:263px;width:319px">Pure It</s><s style="left:582px;width:94px">25416.00</s><s style="left:676px;width:50px">0.00</s><s style="left:726px;width:60px;text-align:left;padding-left:28px"></s></div>
<div class="gr alt" style="top:170px"><s style="left:0;width:45px"><svg class="eic" viewBox="0 0 26 26"><use href="#edit"/></svg></s><s style="left:45px;width:20px">5</s><s style="left:65px;width:100px">22-01-2024</s><s style="left:165px;width:98px">Inv-1333</s><s style="left:263px;width:319px">KIAM</s><s style="left:582px;width:94px">39000.00</s><s style="left:676px;width:50px">0.00</s><s style="left:726px;width:60px;text-align:left;padding-left:28px">Gd</s></div>
<div class="gr" style="top:207px"><s style="left:0;width:45px"><svg class="eic" viewBox="0 0 26 26"><use href="#edit"/></svg></s><s style="left:45px;width:20px">6</s><s style="left:65px;width:100px">14-01-2024</s><s style="left:165px;width:98px">Inv-1332</s><s style="left:263px;width:319px">Hassan Store</s><s style="left:582px;width:94px">21178.00</s><s style="left:676px;width:50px">0.00</s><s style="left:726px;width:60px;text-align:left;padding-left:28px"></s></div>
<div class="gr alt" style="top:244px"><s style="left:0;width:45px"><svg class="eic" viewBox="0 0 26 26"><use href="#edit"/></svg></s><s style="left:45px;width:20px">7</s><s style="left:65px;width:100px">14-01-2024</s><s style="left:165px;width:98px">Inv-1331</s><s style="left:263px;width:319px">Sakib-Crockeries</s><s style="left:582px;width:94px">7750.00</s><s style="left:676px;width:50px">0.00</s><s style="left:726px;width:60px;text-align:left;padding-left:28px"></s></div>
<div class="gr" style="top:281px"><s style="left:0;width:45px"><svg class="eic" viewBox="0 0 26 26"><use href="#edit"/></svg></s><s style="left:45px;width:20px">8</s><s style="left:65px;width:100px">14-01-2024</s><s style="left:165px;width:98px">Inv-1330</s><s style="left:263px;width:319px">Crockeries Corner</s><s style="left:582px;width:94px">480.00</s><s style="left:676px;width:50px">0.00</s><s style="left:726px;width:60px;text-align:left;padding-left:28px"></s></div>
<div class="gr alt" style="top:318px"><s style="left:0;width:45px"><svg class="eic" viewBox="0 0 26 26"><use href="#edit"/></svg></s><s style="left:45px;width:20px">9</s><s style="left:65px;width:100px">11-01-2024</s><s style="left:165px;width:98px">Inv-1329</s><s style="left:263px;width:319px">SKB(Enam Bhai-01407073045)</s><s style="left:582px;width:94px">140516.50</s><s style="left:676px;width:50px">0.00</s><s style="left:726px;width:60px;text-align:left;padding-left:28px">Gd</s></div>
<div class="gr" style="top:355px"><s style="left:0;width:45px"><svg class="eic" viewBox="0 0 26 26"><use href="#edit"/></svg></s><s style="left:45px;width:20px">10</s><s style="left:65px;width:100px">13-01-2024</s><s style="left:165px;width:98px">Inv-1328</s><s style="left:263px;width:319px">Akbar Mama Cake Ghor</s><s style="left:582px;width:94px">7720.00</s><s style="left:676px;width:50px">0.00</s><s style="left:726px;width:60px;text-align:left;padding-left:28px"></s></div>
<div class="gr alt" style="top:392px"><s style="left:0;width:45px"><svg class="eic" viewBox="0 0 26 26"><use href="#edit"/></svg></s><s style="left:45px;width:20px">11</s><s style="left:65px;width:100px">14-01-2024</s><s style="left:165px;width:98px">Inv-1327</s><s style="left:263px;width:319px">Matador</s><s style="left:582px;width:94px">1740.00</s><s style="left:676px;width:50px">0.00</s><s style="left:726px;width:60px;text-align:left;padding-left:28px"></s></div>
<div class="gr" style="top:429px"><s style="left:0;width:45px"><svg class="eic" viewBox="0 0 26 26"><use href="#edit"/></svg></s><s style="left:45px;width:20px">12</s><s style="left:65px;width:100px">27-12-2023</s><s style="left:165px;width:98px">Inv-1326</s><s style="left:263px;width:319px">Nasir Glass</s><s style="left:582px;width:94px">332468.56</s><s style="left:676px;width:50px">0.00</s><s style="left:726px;width:60px;text-align:left;padding-left:28px"></s></div>
<div class="gr alt" style="top:466px"><s style="left:0;width:45px"><svg class="eic" viewBox="0 0 26 26"><use href="#edit"/></svg></s><s style="left:45px;width:20px">13</s><s style="left:65px;width:100px">31-12-2022</s><s style="left:165px;width:98px">Inv-1325</s><s style="left:263px;width:319px">Pure It</s><s style="left:582px;width:94px">41440.00</s><s style="left:676px;width:50px">0.00</s><s style="left:726px;width:60px;text-align:left;padding-left:28px">Go</s></div>
<div class="gr" style="top:503px"><s style="left:0;width:45px"><svg class="eic" viewBox="0 0 26 26"><use href="#edit"/></svg></s><s style="left:45px;width:20px">14</s><s style="left:65px;width:100px">27-12-2022</s><s style="left:165px;width:98px">Inv-1324</s><s style="left:263px;width:319px">Nasir Glass</s><s style="left:582px;width:94px">193878.84</s><s style="left:676px;width:50px">0.00</s><s style="left:726px;width:60px;text-align:left;padding-left:28px"></s></div>
<div class="gr alt" style="top:540px"><s style="left:0;width:45px"><svg class="eic" viewBox="0 0 26 26"><use href="#edit"/></svg></s><s style="left:45px;width:20px">15</s><s style="left:65px;width:100px">20-12-2023</s><s style="left:165px;width:98px">Inv-1322</s><s style="left:263px;width:319px">Shahid Aluminium/Rajia (01819109763)</s><s style="left:582px;width:94px">122035.60</s><s style="left:676px;width:50px">0.00</s><s style="left:726px;width:60px;text-align:left;padding-left:28px"></s></div>
<div class="pgr"><em></em><a style="left:49px" class=cur>1</a><a style="left:78px">2</a><a style="left:107px">3</a><a style="left:136px">4</a><a style="left:165px">5</a><a style="left:194px">6</a><a style="left:223px">7</a><a style="left:252px">8</a><a style="left:281px">9</a><a style="left:310px">10</a><a style="left:339px">...</a></div>
</div>
<div class="abs" style="left:1117px;top:830px;width:766px;height:10px;background:#cdcde4;border-radius:5px"></div>
<div class="abs" style="left:1117px;top:830px;width:511px;height:10px;border-radius:5px;background:linear-gradient(to bottom,#0cb9ea 0%,#0aaedd 45%,#0797bf 100%)"></div>
<div style="position:absolute;left:0;top:0;z-index:20">
<!-- LIVE CHAT -->
<div class="abs" style="left:1878px;top:827px;width:32px;height:123px;background:#fff;border-radius:6px 0 0 6px;box-shadow:0 0 3px rgba(0,0,0,.25)"></div>
<div class="abs" style="left:1881px;top:830px;width:29px;height:117px;background:#00b2e8;border-radius:3px 0 0 3px"></div>
<svg class="abs" style="left:1888px;top:844px" width="20" height="20" viewBox="0 0 20 20"><circle cx="9.6" cy="9.3" r="8" fill="#fff"/><path d="M14 14l3.6 1.2-2-3z" fill="#fff"/><path d="M9.300 4.800L12.400 8.300L10.600 9.300L11.700 13.400L7.700 9.300L9.800 8.400z" fill="#2a7df0"/></svg>
<div class="abs" style="left:1864px;top:897px;width:64px;height:16px;transform:rotate(-90deg);font-size:14px;font-weight:bold;color:#fff;line-height:16px;text-align:center;white-space:nowrap">Live Chat</div>

</div>
</body>
</html>
